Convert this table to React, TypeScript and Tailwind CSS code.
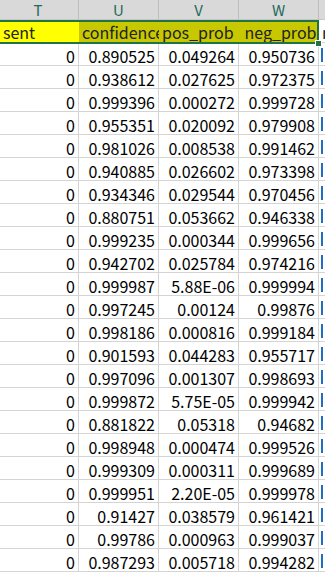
import React from "react";

const rows: [string, string, string, string][] = [
  ["0", "0.890525", "0.049264", "0.950736"],
  ["0", "0.938612", "0.027625", "0.972375"],
  ["0", "0.999396", "0.000272", "0.999728"],
  ["0", "0.955351", "0.020092", "0.979908"],
  ["0", "0.981026", "0.008538", "0.991462"],
  ["0", "0.940885", "0.026602", "0.973398"],
  ["0", "0.934346", "0.029544", "0.970456"],
  ["0", "0.880751", "0.053662", "0.946338"],
  ["0", "0.999235", "0.000344", "0.999656"],
  ["0", "0.942702", "0.025784", "0.974216"],
  ["0", "0.999987", "5.88E-06", "0.999994"],
  ["0", "0.997245", "0.00124", "0.99876"],
  ["0", "0.998186", "0.000816", "0.999184"],
  ["0", "0.901593", "0.044283", "0.955717"],
  ["0", "0.997096", "0.001307", "0.998693"],
  ["0", "0.999872", "5.75E-05", "0.999942"],
  ["0", "0.881822", "0.05318", "0.94682"],
  ["0", "0.998948", "0.000474", "0.999526"],
  ["0", "0.999309", "0.000311", "0.999689"],
  ["0", "0.999951", "2.20E-05", "0.999978"],
  ["0", "0.91427", "0.038579", "0.961421"],
  ["0", "0.99786", "0.000963", "0.999037"],
  ["0", "0.987293", "0.005718", "0.994282"],
];

const font = { fontFamily: '"Noto Sans CJK SC", "Noto Sans", sans-serif' };

export default function App() {
  return (
    <div
      className="w-[325px] h-[574px] overflow-hidden bg-white relative text-black"
      style={font}
    >
      {/* column header */}
      <div className="flex h-[20px] bg-[#d9d9d9] border-b border-[#c6c6c6] text-[#23695a] text-[15px] leading-[19px]">
        <div className="w-[79px] shrink-0 border-r border-[#bdbdbd] text-center">
          <span className="relative left-[-1px]">T</span>
        </div>
        <div className="w-[80px] shrink-0 border-r border-[#bdbdbd] text-center">U</div>
        <div className="w-[80px] shrink-0 border-r border-[#bdbdbd] text-center">V</div>
        <div className="w-[80px] shrink-0 border-r border-[#bdbdbd] text-center">W</div>
        <div className="flex-1" />
      </div>

      {/* header row (selected) */}
      <div className="flex h-[23px] text-[16px] leading-[22px] pt-[1px] text-[#222]">
        <div className="w-[79px] shrink-0 bg-[#ffff00] pl-[3px] overflow-hidden whitespace-nowrap">
          sent
        </div>
        <div className="w-[80px] shrink-0 bg-[#c8c800] pl-[3px] overflow-hidden whitespace-nowrap">
          confidence
        </div>
        <div className="w-[80px] shrink-0 bg-[#c8c800] pl-[3px] overflow-hidden whitespace-nowrap">
          pos_prob
        </div>
        <div className="w-[80px] shrink-0 bg-[#c8c800] pl-[3px] overflow-hidden whitespace-nowrap text-center">
          neg_prob
        </div>
        <div className="flex-1 pl-[3px] overflow-hidden whitespace-nowrap border-b border-[#d4d4d4]">
          n
        </div>
      </div>

      {/* data rows */}
      {rows.map((r, i) => (
        <div
          key={i}
          className="flex h-[23px] text-[16px] leading-[22px] border-b border-[#d4d4d4]"
        >
          <div className="w-[79px] shrink-0 border-r border-[#d4d4d4] text-right pr-[3px] pt-[2px]">
            {r[0]}
          </div>
          <div className="w-[80px] shrink-0 border-r border-[#d4d4d4] text-right pr-[3px] pt-[2px]">
            {r[1]}
          </div>
          <div className="w-[80px] shrink-0 border-r border-[#d4d4d4] text-right pr-[3px] pt-[2px]">
            {r[2]}
          </div>
          <div className="w-[80px] shrink-0 border-r border-[#d4d4d4] text-right pr-[3px] pt-[2px]">
            {r[3]}
          </div>
          <div className="flex-1 flex items-center pl-[2px] pt-[2px]">
            <div className="w-[2px] h-[14px] bg-[#1f6fc5]" />
          </div>
        </div>
      ))}

      {/* selection border */}
      <div className="absolute left-[-3px] top-[20px] w-[322px] h-[24px] border-2 border-[#217346] pointer-events-none" />
      <div className="absolute left-[315px] top-[40px] w-[7px] h-[7px] bg-[#217346] border border-white" />
    </div>
  );
}
